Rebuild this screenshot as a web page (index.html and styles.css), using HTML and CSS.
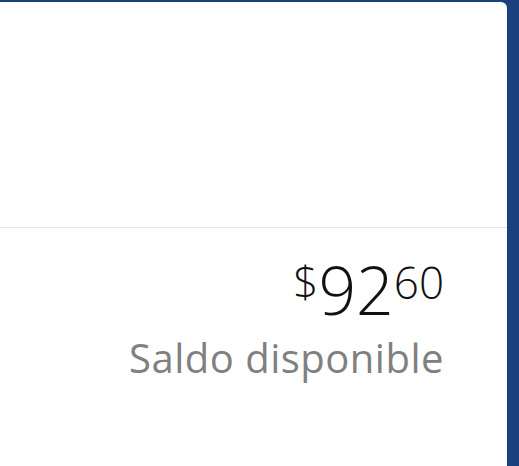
FILE: index.html
```html
<!DOCTYPE html>
<html lang="es">
<head>
  <meta charset="UTF-8">
  <meta name="viewport" content="width=device-width, initial-scale=1.0">
  <title>Saldo</title>
  <link rel="stylesheet" href="styles.css">
</head>
<body>
  <!-- Card -->
  <div class="card">
    <div class="card-top"></div>

    <!-- Balance -->
    <div class="balance">
      <div class="amount">
        <span class="currency">$</span><span class="whole">92</span><span class="cents">60</span>
      </div>
      <div class="label">Saldo disponible</div>
    </div>
  </div>
</body>
</html>
```

FILE: styles.css
```css
body {
  font-family: 'Open Sans', sans-serif;
  margin: 0;
  padding: 2px 12px 0 0;
  background: #1a407e;
  height: 466px;
  box-sizing: border-box;
  overflow: hidden;
}

.card {
  background: #fff;
  border-top-right-radius: 6px;
  height: 100%;
}

.card-top {
  height: 225px;
  border-bottom: 1px solid #e6e6e6;
}

.balance {
  text-align: right;
  padding: 28px 63px 0 0;
}

.amount {
  color: #111;
  font-weight: 300;
  line-height: 1;
  white-space: nowrap;
}

.currency {
  font-size: 44px;
  vertical-align: top;
  position: relative;
  top: 3px;
}

.whole {
  font-size: 66px;
}

.cents {
  font-size: 44px;
  vertical-align: top;
  position: relative;
  top: 4px;
}

.label {
  margin-top: 16px;
  font-size: 40px;
  letter-spacing: 0.5px;
  color: #808080;
  line-height: 1;
}
```
